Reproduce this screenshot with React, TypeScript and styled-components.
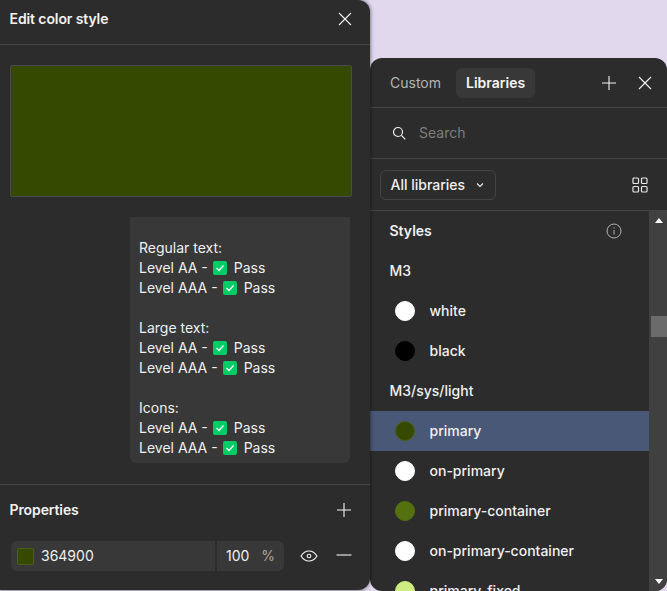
import React from "react";
import styled, { createGlobalStyle } from "styled-components";

const GlobalStyle = createGlobalStyle`
  html, body {
    margin: 0;
    height: 100%;
    overflow: hidden;
    background: #e1d8ee;
    font-family: Inter, "Noto Sans", sans-serif;
  }
  * { box-sizing: border-box; }
`;

const Page = styled.div`
  display: flex;
  align-items: flex-start;
  width: 667px;
  height: 591px;
  overflow: hidden;
`;

const Panel = styled.div`
  background: #2c2c2c;
  color: #f0f0f0;
  font-size: 14px;
  line-height: 20px;
`;

const EditPanel = styled(Panel)`
  width: 370px;
  height: 590px;
  border-radius: 0 12px 12px 0;
  box-shadow: 0 0 4px rgba(0, 0, 0, 0.6);
  display: flex;
  flex-direction: column;
  position: relative;
  z-index: 1;
`;

const EditHeader = styled.div`
  height: 45px;
  flex-shrink: 0;
  display: flex;
  align-items: center;
  justify-content: space-between;
  padding: 0 18px 6px 9.5px;
  border-bottom: 1px solid #444;
`;

const Title = styled.div`
  font-weight: 600;
  letter-spacing: -0.1px;
  color: #f2f2f2;
`;

const Swatch = styled.div`
  margin: 20px 0 0 10px;
  width: 342px;
  height: 132px;
  flex-shrink: 0;
  background: #364900;
  border: 1px solid #4a4a4a;
  border-radius: 2px;
`;

const Report = styled.div`
  margin: 20px 0 0 130px;
  width: 220px;
  height: 246px;
  flex-shrink: 0;
  padding: 21px 0 0 9px;
  background: #383838;
  border-radius: 0 0 6px 6px;
`;

const ReportLine = styled.div`
  display: flex;
  align-items: center;
  height: 20px;
  white-space: pre;
`;

const CheckBox = styled.span`
  width: 14px;
  height: 14px;
  margin: 0 7px 0 5px;
  border-radius: 2px;
  background: #00cc66;
  display: flex;
  align-items: center;
  justify-content: center;
`;

const Properties = styled.div`
  margin-top: 21px;
  border-top: 1px solid #444;
  padding: 15px 18px 0 9.5px;
`;

const PropertiesHead = styled.div`
  display: flex;
  align-items: center;
  justify-content: space-between;
  height: 20px;
`;

const PropertyRow = styled.div`
  display: flex;
  align-items: center;
  margin: 21px 0 0 1.5px;
`;

const ColorField = styled.div`
  width: 204px;
  height: 30px;
  padding-left: 6px;
  display: flex;
  align-items: center;
  gap: 7px;
  background: #383838;
  border-radius: 6px 0 0 6px;
`;

const ColorChip = styled.span`
  width: 17px;
  height: 17px;
  background: #364900;
  border: 1px solid #4a5f10;
  border-radius: 2px;
`;

const OpacityField = styled.div`
  width: 67px;
  height: 30px;
  margin-left: 2px;
  padding: 0 9px;
  display: flex;
  align-items: center;
  justify-content: space-between;
  background: #383838;
  border-radius: 0 6px 6px 0;
`;

const Percent = styled.span`
  color: #a8a8a8;
`;

const RowIcons = styled.div`
  display: flex;
  align-items: center;
  margin-left: 16px;
  gap: 18px;
`;

const LibraryPanel = styled(Panel)`
  width: 297px;
  height: 533px;
  margin-top: 58px;
  border-radius: 12px;
  flex-shrink: 0;
  overflow: hidden;
  display: flex;
  flex-direction: column;
`;

const TabBar = styled.div`
  height: 50px;
  flex-shrink: 0;
  display: flex;
  align-items: center;
  padding: 0 15px 0 10px;
  border-bottom: 1px solid #444;
`;

const Tab = styled.div<{ $active?: boolean }>`
  height: 30px;
  padding: 0 10px;
  display: flex;
  align-items: center;
  border-radius: 6px;
  font-weight: ${({ $active }) => ($active ? 600 : 400)};
  color: ${({ $active }) => ($active ? "#f4f4f4" : "#b4b4b4")};
  background: ${({ $active }) => ($active ? "#383838" : "transparent")};
  margin-right: ${({ $active }) => ($active ? "auto" : "5px")};
`;

const TabIcons = styled.div`
  display: flex;
  align-items: center;
  gap: 21px;
`;

const SearchRow = styled.div`
  height: 51px;
  flex-shrink: 0;
  display: flex;
  align-items: center;
  gap: 13px;
  padding-left: 22px;
  color: #7e7e7e;
  border-bottom: 1px solid #444;
`;

const FilterRow = styled.div`
  height: 52px;
  flex-shrink: 0;
  display: flex;
  align-items: center;
  justify-content: space-between;
  padding: 0 19px 0 10px;
  border-bottom: 1px solid #444;
`;

const Select = styled.div`
  width: 116px;
  height: 30px;
  padding: 0 11px 0 9.5px;
  display: flex;
  align-items: center;
  justify-content: space-between;
  border: 1px solid #444;
  border-radius: 6px;
  font-weight: 500;
`;

const ListArea = styled.div`
  flex: 1;
  min-height: 0;
  display: flex;
  overflow: hidden;
`;

const List = styled.div`
  flex: 1;
  overflow: hidden;
`;

const SectionRow = styled.div<{ $strong?: boolean }>`
  height: 40px;
  padding: 0 27px 0 19.5px;
  display: flex;
  align-items: center;
  justify-content: space-between;
  font-weight: ${({ $strong }) => ($strong ? 600 : 500)};
`;

const StyleRow = styled.div<{ $selected?: boolean }>`
  height: 40px;
  padding-left: 25px;
  display: flex;
  align-items: center;
  gap: 14.5px;
  font-weight: 500;
  background: ${({ $selected }) => ($selected ? "#4a5878" : "transparent")};
`;

const Dot = styled.span<{ $color: string; $ring?: string }>`
  width: 20px;
  height: 20px;
  border-radius: 50%;
  flex-shrink: 0;
  background: ${({ $color }) => $color};
  border: 1px solid ${({ $ring, $color }) => $ring ?? $color};
`;

const Scrollbar = styled.div`
  width: 18px;
  flex-shrink: 0;
  padding-left: 2px;
  background: #404040;
  display: flex;
  flex-direction: column;
  align-items: center;
  position: relative;
`;

const Arrow = styled.span<{ $down?: boolean }>`
  position: absolute;
  left: 6px;
  ${({ $down }) => ($down ? "bottom: 7px;" : "top: 7px;")}
  width: 0;
  height: 0;
  border-left: 4.5px solid transparent;
  border-right: 4.5px solid transparent;
  ${({ $down }) =>
    $down ? "border-top: 5px solid #fff;" : "border-bottom: 5px solid #fff;"}
`;

const Thumb = styled.div`
  width: 16px;
  height: 21px;
  margin-top: 105px;
  background: #6b6b6b;
`;

const Minus = () => (
  <svg width="16" height="16" viewBox="0 0 16 16" fill="none" stroke="#f4f4f4" strokeWidth="1.1">
    <path d="M0.5 7h15" />
  </svg>
);

const Plus = () => (
  <svg width="16" height="16" viewBox="0 0 16 16" fill="none" stroke="#f4f4f4" strokeWidth="1.1">
    <path d="M1 8h14M8 1v14" />
  </svg>
);

const Close = () => (
  <svg width="14" height="14" viewBox="0 0 14 14" fill="none" stroke="#f4f4f4" strokeWidth="1.1">
    <path d="M1 1l12 12M13 1L1 13" />
  </svg>
);

const Eye = () => (
  <svg width="18" height="12" viewBox="0 0 18 12" fill="none" stroke="#f4f4f4" strokeWidth="1.1">
    <path d="M1 6c2-3.2 4.8-5 8-5s6 1.8 8 5c-2 3.2-4.800 5-8 5s-6-1.800-8-5z" />
    <circle cx="9" cy="6" r="1.800" />
  </svg>
);

const SearchIcon = () => (
  <svg width="14" height="14" viewBox="0 0 14 14" fill="none" stroke="#f0f0f0" strokeWidth="1.2">
    <circle cx="6" cy="6" r="4.500" />
    <path d="M9.300 9.300l4 4" />
  </svg>
);

const Chevron = () => (
  <svg width="8" height="6" viewBox="0 0 8 6" fill="none" stroke="#f0f0f0" strokeWidth="1.1">
    <path d="M1 1.500l3 3 3-3" />
  </svg>
);

const GridIcon = () => (
  <svg width="16" height="16" viewBox="0 0 16 16" fill="none" stroke="#e8e8e8" strokeWidth="1.200">
    <rect x="1" y="1" width="5.500" height="5.500" rx="1" />
    <rect x="9.500" y="1" width="5.500" height="5.500" rx="1" />
    <rect x="1" y="9.500" width="5.500" height="5.500" rx="1" />
    <rect x="9.500" y="9.500" width="5.500" height="5.500" rx="1" />
  </svg>
);

const InfoIcon = () => (
  <svg width="16" height="16" viewBox="0 0 16 16" fill="none" stroke="#b4b4b4" strokeWidth="1">
    <circle cx="8" cy="8" r="7" />
    <path d="M8 7v4.500M8 4.300v1.200" />
  </svg>
);

const Check = () => (
  <svg width="10" height="8" viewBox="0 0 10 8" fill="none" stroke="#fff" strokeWidth="1.300">
    <path d="M1.500 4l2.500 2.500 4.500-5" />
  </svg>
);

const reportGroups = ["Regular text:", "Large text:", "Icons:"];
const levels = ["Level AA", "Level AAA"];

const topStyles = [
  { name: "white", color: "#ffffff" },
  { name: "black", color: "#000000" },
];

const sysStyles = [
  { name: "primary", color: "#364900", ring: "#4a5f10", selected: true },
  { name: "on-primary", color: "#ffffff" },
  { name: "primary-container", color: "#55700f" },
  { name: "on-primary-container", color: "#ffffff" },
  { name: "primary-fixed", color: "#cfec83" },
];

export default function App() {
  return (
    <Page>
      <GlobalStyle />
      <EditPanel>
        <EditHeader>
          <Title>Edit color style</Title>
          <Close />
        </EditHeader>
        <Swatch />
        <Report>
          {reportGroups.map((group, i) => (
            <React.Fragment key={group}>
              {i > 0 && <ReportLine />}
              <ReportLine>{group}</ReportLine>
              {levels.map((level) => (
                <ReportLine key={level}>
                  {level} -
                  <CheckBox>
                    <Check />
                  </CheckBox>
                  Pass
                </ReportLine>
              ))}
            </React.Fragment>
          ))}
        </Report>
        <Properties>
          <PropertiesHead>
            <Title>Properties</Title>
            <Plus />
          </PropertiesHead>
          <PropertyRow>
            <ColorField>
              <ColorChip />
              364900
            </ColorField>
            <OpacityField>
              100
              <Percent>%</Percent>
            </OpacityField>
            <RowIcons>
              <Eye />
              <Minus />
            </RowIcons>
          </PropertyRow>
        </Properties>
      </EditPanel>

      <LibraryPanel>
        <TabBar>
          <Tab>Custom</Tab>
          <Tab $active>Libraries</Tab>
          <TabIcons>
            <Plus />
            <Close />
          </TabIcons>
        </TabBar>
        <SearchRow>
          <SearchIcon />
          Search
        </SearchRow>
        <FilterRow>
          <Select>
            All libraries
            <Chevron />
          </Select>
          <GridIcon />
        </FilterRow>
        <ListArea>
          <List>
            <SectionRow $strong>
              Styles
              <InfoIcon />
            </SectionRow>
            <SectionRow>M3</SectionRow>
            {topStyles.map((s) => (
              <StyleRow key={s.name}>
                <Dot $color={s.color} />
                {s.name}
              </StyleRow>
            ))}
            <SectionRow>M3/sys/light</SectionRow>
            {sysStyles.map((s) => (
              <StyleRow key={s.name} $selected={s.selected}>
                <Dot $color={s.color} $ring={s.ring} />
                {s.name}
              </StyleRow>
            ))}
          </List>
          <Scrollbar>
            <Arrow />
            <Thumb />
            <Arrow $down />
          </Scrollbar>
        </ListArea>
      </LibraryPanel>
    </Page>
  );
}
